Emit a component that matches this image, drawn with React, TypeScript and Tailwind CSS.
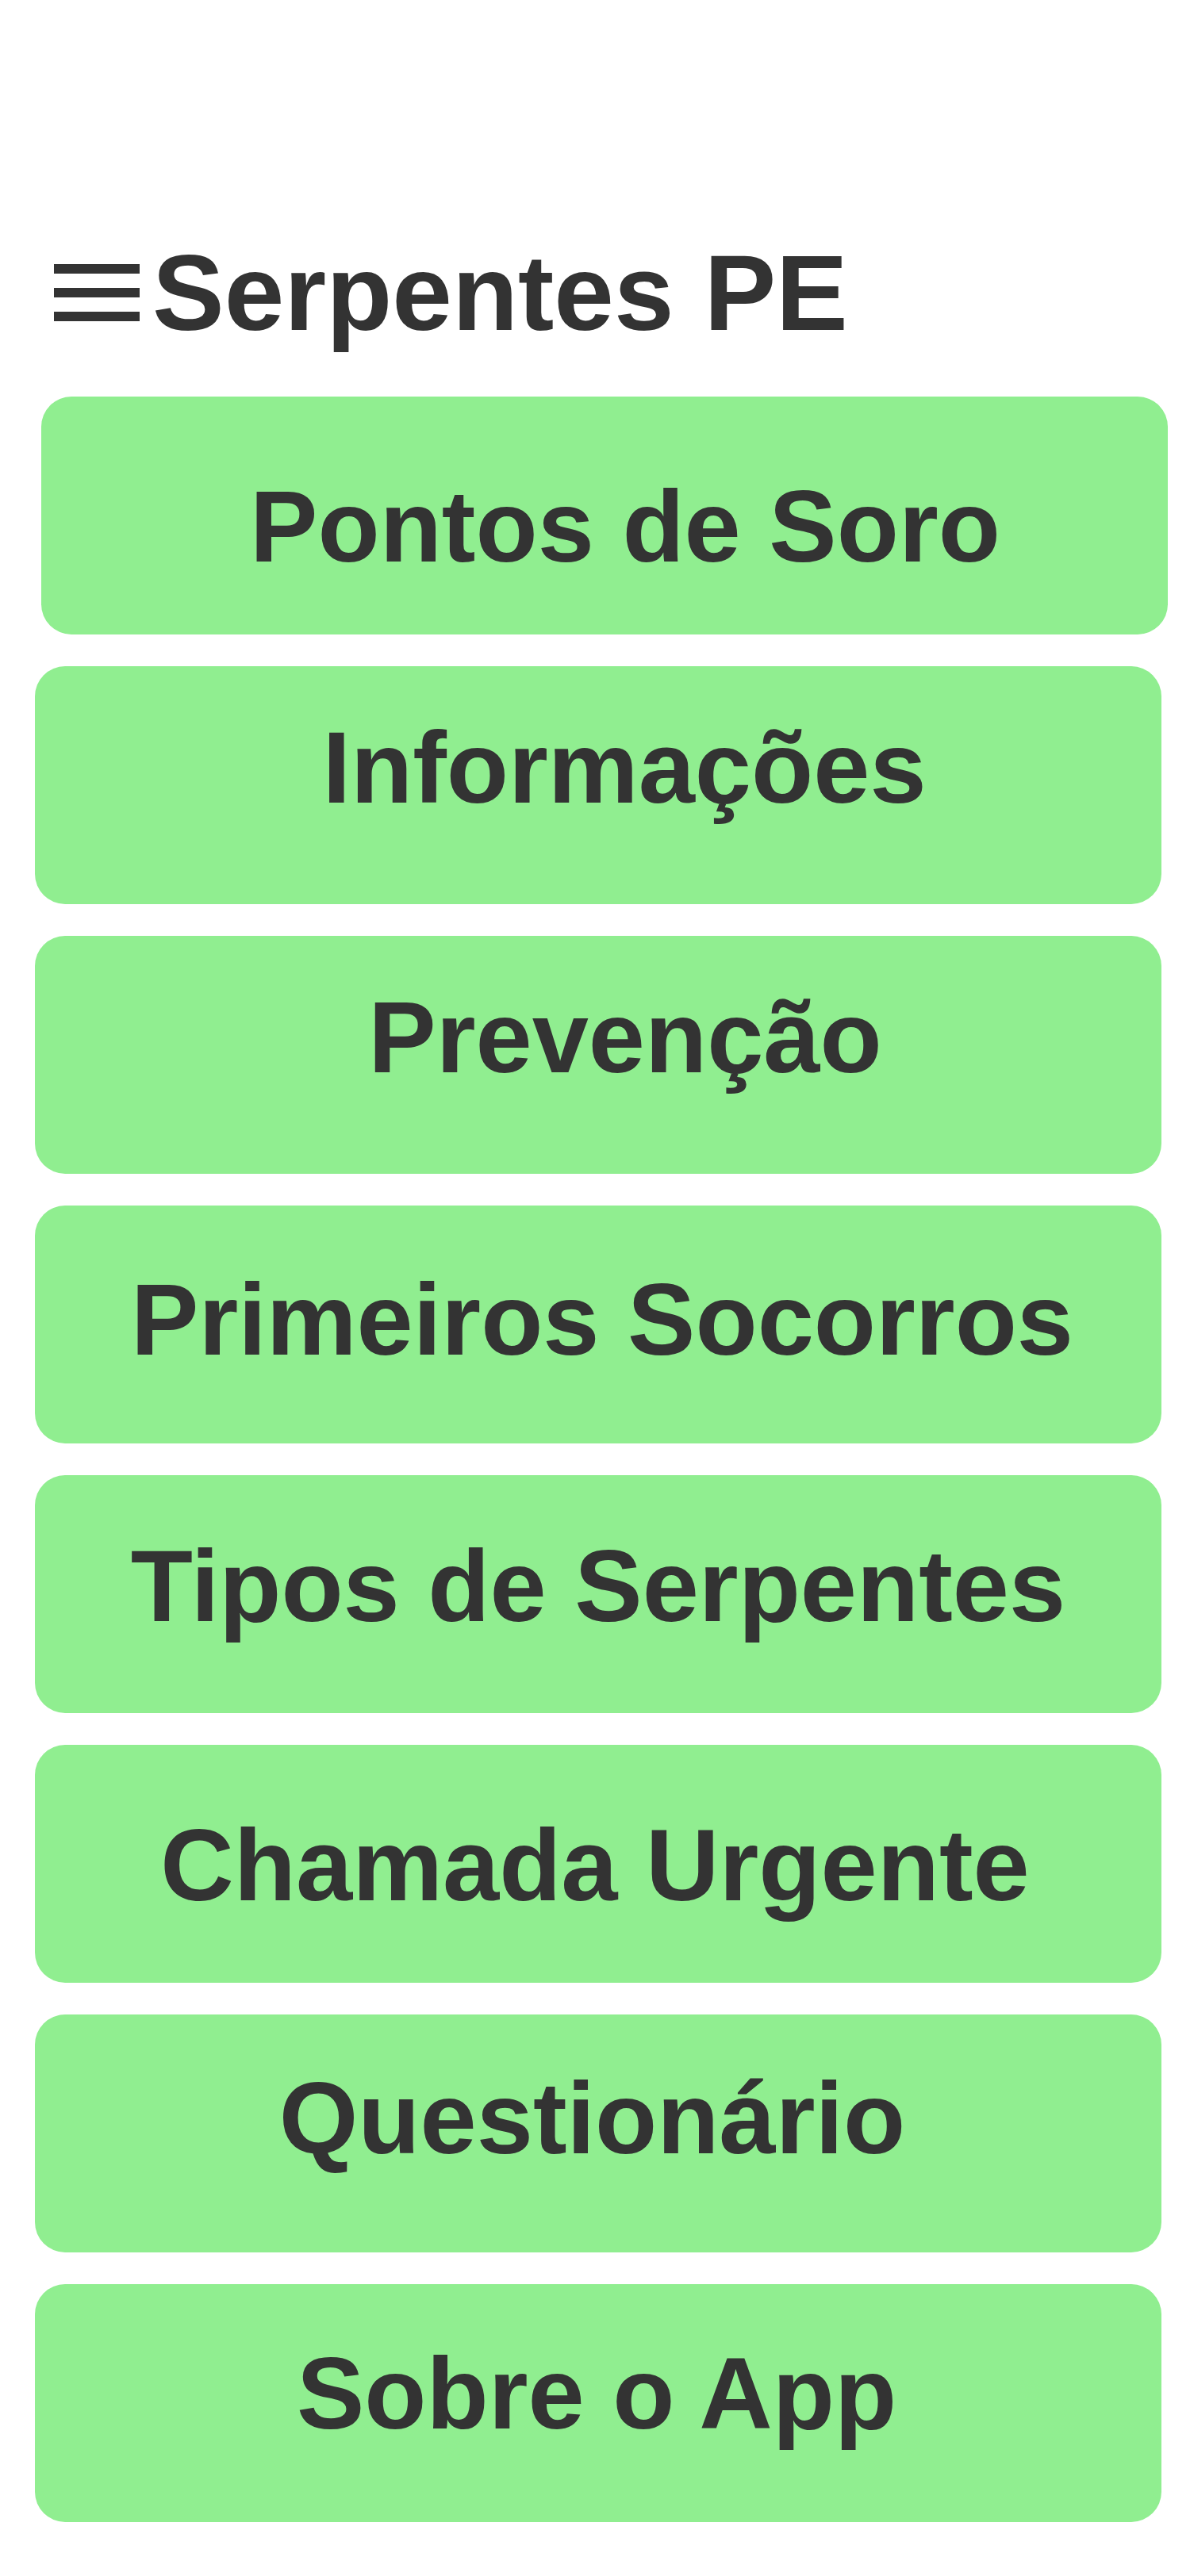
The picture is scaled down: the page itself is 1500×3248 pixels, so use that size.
type MenuItem = {
  label: string,
  className: string
}

const items: MenuItem[] = [
  { label: 'Pontos de Soro', className: 'ml-[52px] pt-[27px] pl-[52px]' },
  { label: 'Informações', className: 'ml-[44px] pb-[45px] pl-[66px]' },
  { label: 'Prevenção', className: 'ml-[44px] pb-[45px] pl-[68px]' },
  { label: 'Primeiros Socorros', className: 'ml-[44px] pb-[13px] pl-[10px]' },
  { label: 'Tipos de Serpentes', className: 'ml-[44px] pb-[21px]' },
  { label: 'Chamada Urgente', className: 'ml-[44px] pt-[3px] pr-[8px]' },
  { label: 'Questionário', className: 'ml-[44px] pb-[39px] pr-[15px]' },
  { label: 'Sobre o App', className: 'ml-[44px] pb-[24px] pr-[4px]' },
]

const MenuIcon = () => (
  <svg width="108" height="72" viewBox="0 0 108 72" className="shrink-0">
    <rect x="0" y="0" width="108" height="12" fill="#333333" />
    <rect x="0" y="30" width="108" height="12" fill="#333333" />
    <rect x="0" y="60" width="108" height="12" fill="#333333" />
  </svg>
)

const App = () => {
  return (
    <div className="min-h-[3248px] bg-white pt-[301px] text-[#333333] font-['Liberation_Sans',Arial,sans-serif]">
      <div className="flex items-center gap-[16px] pl-[68px] h-[136px]">
        <MenuIcon />
        <h1 className="text-[136px] font-bold leading-none">Serpentes PE</h1>
      </div>

      <div className="mt-[63px] flex flex-col gap-[40px]">
        {items.map((item) => (
          <button
            key={item.label}
            className={`w-[1420px] h-[300px] rounded-[38px] bg-[#90ee90] flex items-center justify-center ${item.className}`}
          >
            <span className="text-[128px] font-bold leading-none whitespace-nowrap">{item.label}</span>
          </button>
        ))}
      </div>
    </div>
  )
}

export default App
